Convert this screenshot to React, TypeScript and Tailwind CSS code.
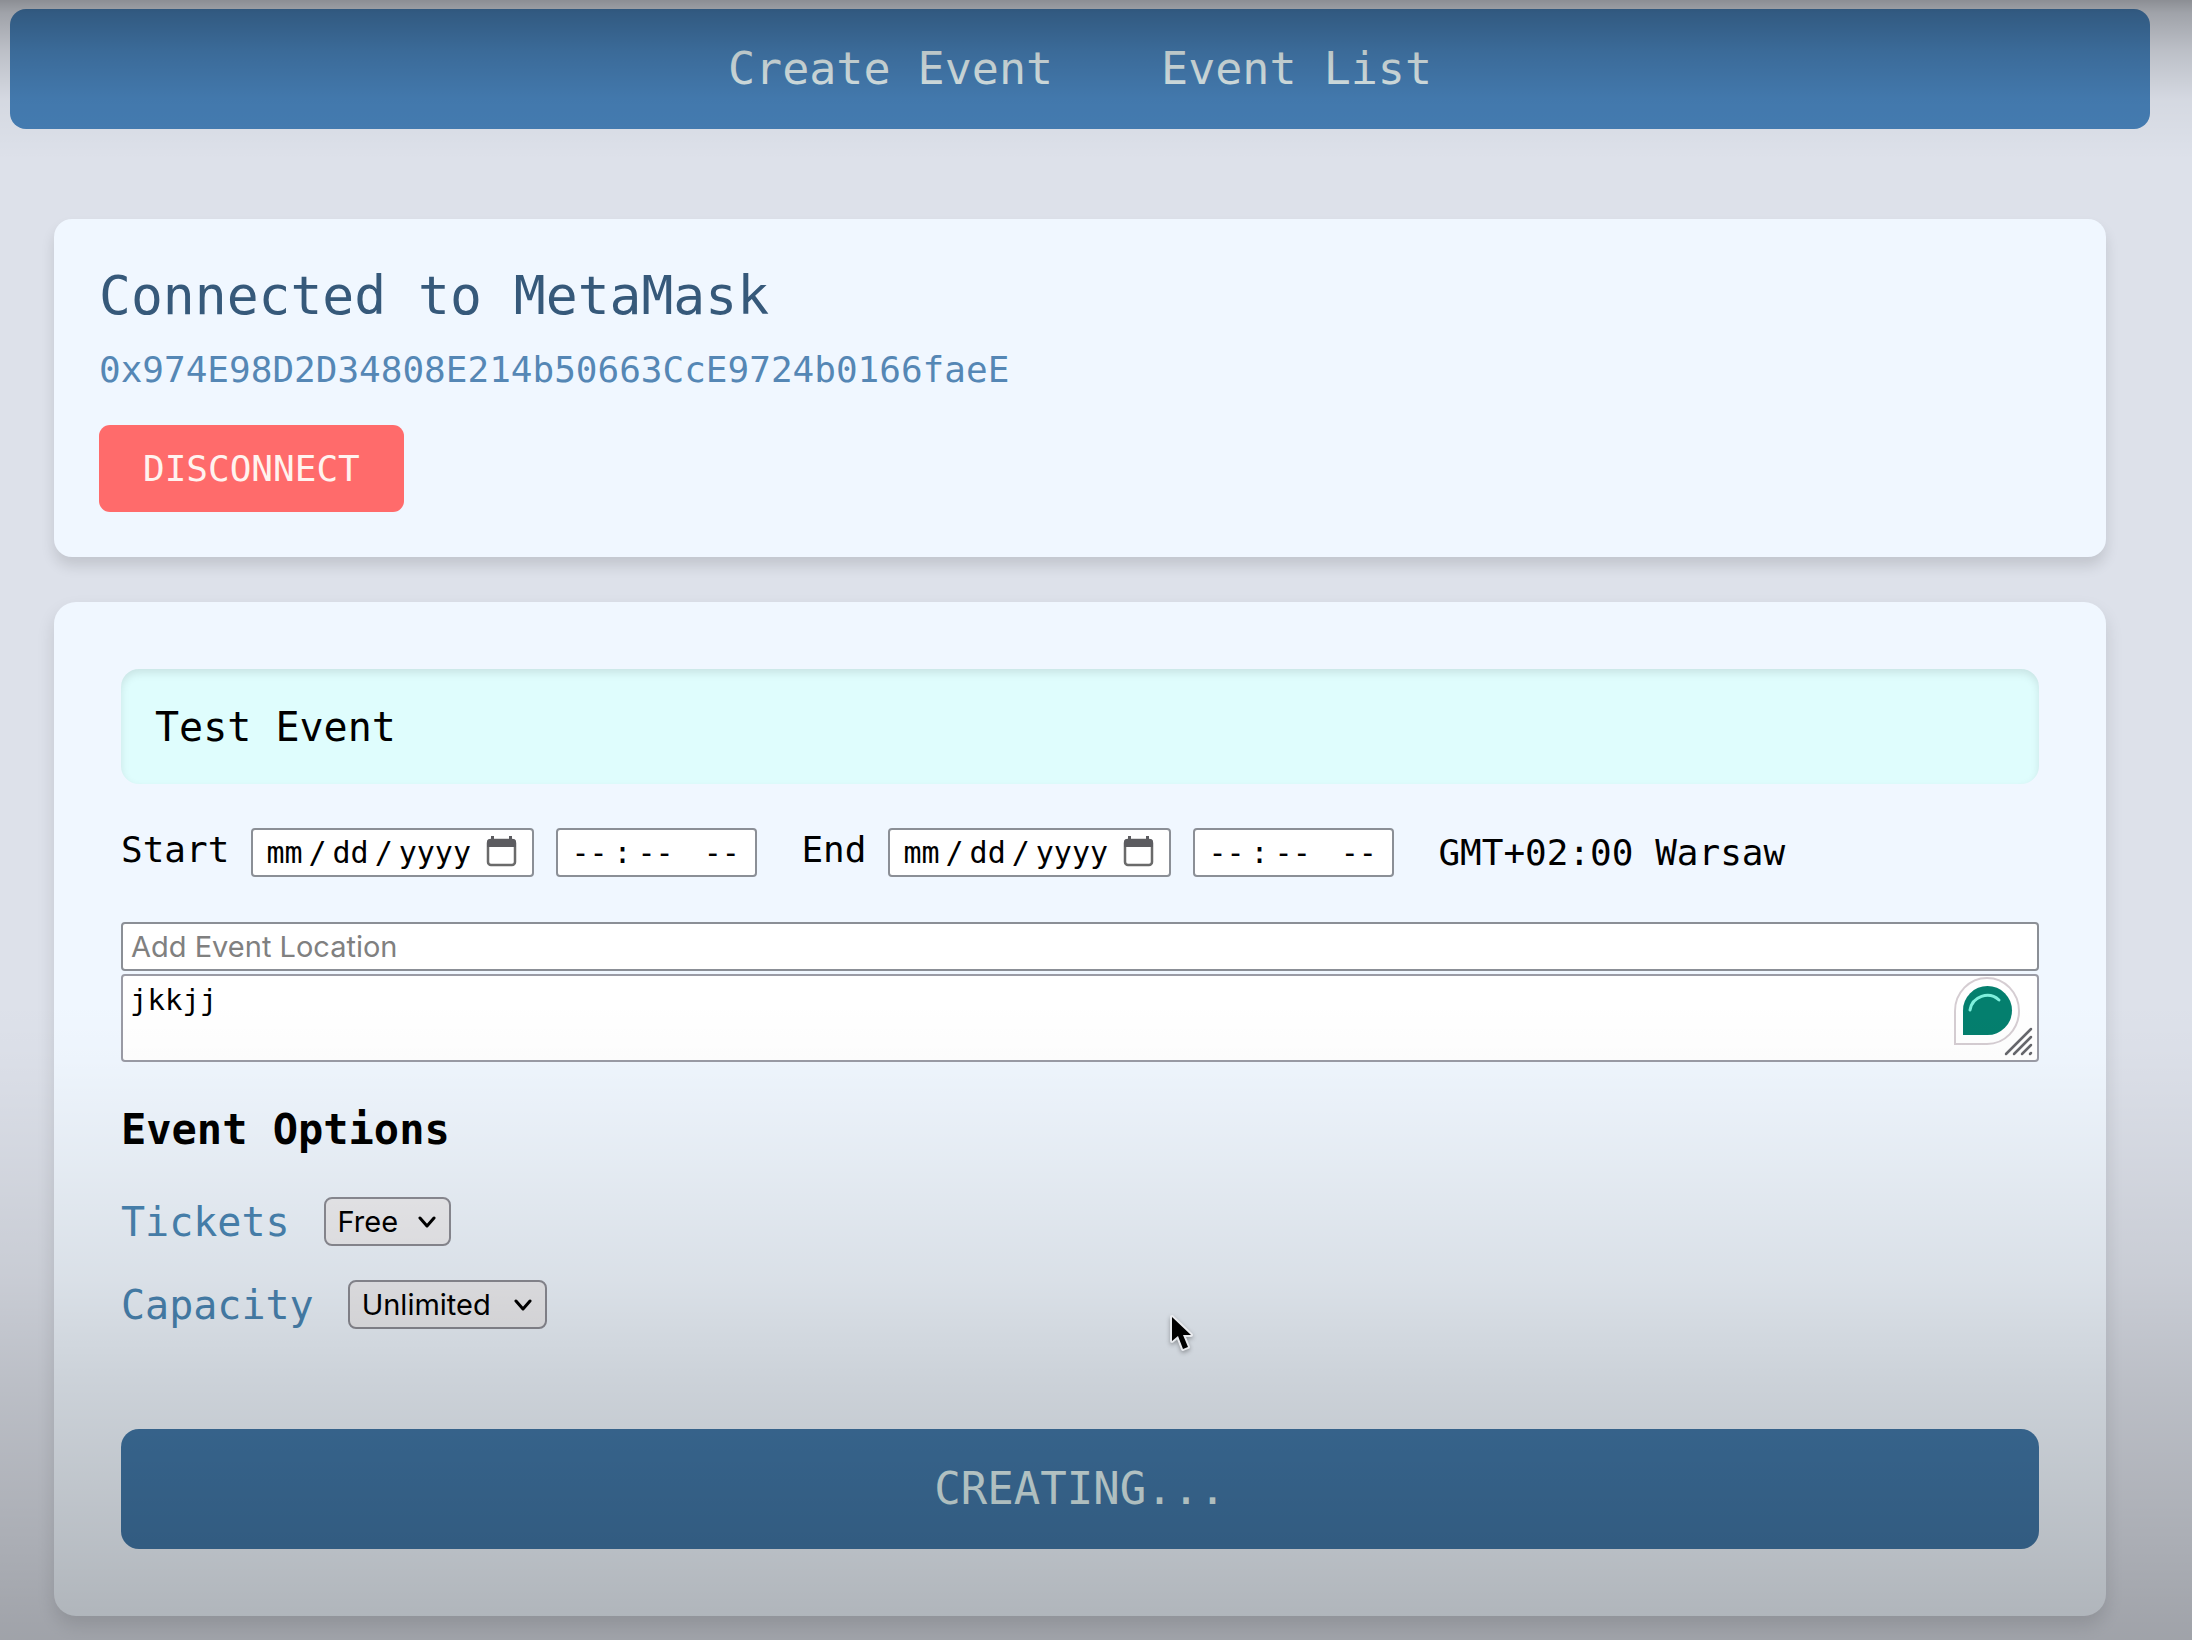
import React, { useState } from 'react';

interface DateTimeFieldProps {
  id: string;
  label: string;
}

const DateTimeField: React.FC<DateTimeFieldProps> = ({ id, label }) => {
  return (
    <div className="flex items-center gap-[22px]">
      <label htmlFor={`${id}-date`} className="pb-[6px] text-[36px] leading-[42px]">
        {label}
      </label>
      <div className="relative">
        <input
          id={`${id}-date`}
          type="date"
          className="block h-[49px] w-[283px] rounded-[4px] border-2 border-[#8b8f96] bg-white pl-[12px] pr-[14px] text-[30px] leading-[36px] text-black [&::-webkit-calendar-picker-indicator]:m-0 [&::-webkit-calendar-picker-indicator]:size-[32px] [&::-webkit-calendar-picker-indicator]:p-0 [&::-webkit-calendar-picker-indicator]:opacity-0 [&::-webkit-datetime-edit-text]:px-[5px]"
        />
        <svg className="pointer-events-none absolute right-[17px] top-[8px] size-[31px]" viewBox="0 0 31 31" fill="none">
          <rect x="2" y="4" width="27" height="25" rx="3" stroke="#6a6a6a" strokeWidth="2.500" />
          <path d="M1 11V6a3 3 0 0 1 3-3h1V0h3v3h15V0h3v3h1a3 3 0 0 1 3 3v5z" fill="#5c5c60" />
        </svg>
      </div>
      <input
        id={`${id}-time`}
        type="time"
        aria-label={`${label} time`}
        className="h-[49px] w-[201px] rounded-[4px] border-2 border-[#8b8f96] bg-white pl-[12px] text-[30px] leading-[36px] text-black [&::-webkit-calendar-picker-indicator]:hidden [&::-webkit-datetime-edit-text]:px-[5px]"
      />
    </div>
  );
};

interface OptionSelectProps {
  id: string;
  label: string;
  options: string[];
  selectClass: string;
}

const OptionSelect: React.FC<OptionSelectProps> = ({ id, label, options, selectClass }) => {
  return (
    <div className="flex items-center gap-[34px]">
      <label htmlFor={id} className="text-[40px] leading-[48px] text-[#4a86b4]">
        {label}
      </label>
      <div className="relative">
        <select
          id={id}
          className={`h-[49px] appearance-none rounded-[8px] border-2 border-[#8e8e96] bg-[#efeff2] pl-[12px] font-['Inter',sans-serif] text-[29px] leading-[36px] text-black ${selectClass}`}
        >
          {options.map((option) => (
            <option key={option}>{option}</option>
          ))}
        </select>
        <svg className="pointer-events-none absolute right-[15px] top-[19px] h-[13px] w-[18px]" viewBox="0 0 18 13" fill="none" stroke="#000" strokeWidth="3">
          <path strokeLinecap="round" strokeLinejoin="round" d="M2 2l7 8 7-8" />
        </svg>
      </div>
    </div>
  );
};

const Navbar: React.FC = () => {
  return (
    <nav className="flex justify-center gap-[108px] rounded-[16px] bg-[#457db3] py-[34px] text-[45px] leading-[52px] text-[#dbe8ea]">
      <a href="#create">Create Event</a>
      <a href="#list">Event List</a>
    </nav>
  );
};

const WalletCard: React.FC = () => {
  return (
    <section className="rounded-[18px] bg-[#f0f7ff] p-[45px] shadow-[0_9px_14px_rgba(0,0,0,0.12)]">
      <h2 className="text-[53px] leading-[63px] text-[#36597a]">Connected to MetaMask</h2>
      <p className="mt-[22px] text-[36px] leading-[42px] text-[#5587b5]">
        0x974E98D2D34808E214b50663CcE9724b0166faeE
      </p>
      <button
        type="button"
        className="mt-[34px] block h-[87px] rounded-[11px] bg-[#ff6b6b] px-[44px] text-[36px] leading-[42px] text-[#fff3ef]"
      >
        DISCONNECT
      </button>
    </section>
  );
};

const EventForm: React.FC = () => {
  const [title, setTitle] = useState('Test Event');
  const [description, setDescription] = useState('jkkjj');

  return (
    <form className="rounded-[22px] bg-[#f0f7ff] p-[67px] shadow-[0_9px_18px_rgba(0,0,0,0.12)]">
      <input
        type="text"
        aria-label="Event name"
        value={title}
        onChange={(e) => setTitle(e.target.value)}
        className="block h-[115px] w-full rounded-[18px] bg-[#dffdfd] px-[34px] text-[40px] leading-[48px] text-black shadow-[inset_0_4px_9px_rgba(0,0,0,0.1)]"
      />

      {/* Dates */}
      <div className="mt-11 flex flex-wrap items-center gap-11">
        <DateTimeField id="start" label="Start" />
        <DateTimeField id="end" label="End" />
        <span className="text-[36px] leading-[42px]">GMT+02:00 Warsaw</span>
      </div>

      <input
        type="text"
        aria-label="Event location"
        placeholder="Add Event Location"
        className="mt-[45px] block h-[49px] w-full rounded-[4px] border-2 border-[#8b8f96] bg-white px-2 font-['Inter',sans-serif] text-[29px] leading-[36px] placeholder:text-[#808080]"
      />
      <div className="relative mt-[3px]">
        <textarea
          aria-label="Event description"
          value={description}
          onChange={(e) => setDescription(e.target.value)}
          className="block h-[88px] w-full resize-none rounded-[4px] border-2 border-[#9a9ba5] bg-white px-[7px] py-[6px] text-[29px] leading-[36px] text-black"
        />
        {/* Writing assistant bubble */}
        <svg className="pointer-events-none absolute right-[19px] top-[3px] h-[68px] w-[66px]" viewBox="0 0 66 68" fill="none">
          <path d="M1 67V34a32 33 0 1 1 32 33z" fill="#fff" stroke="#d5cdd2" strokeWidth="2" />
          <path d="M9 58V33.500A24.500 24.500 0 1 1 33.500 58z" fill="#047f6e" />
          <path d="M16 33a17.500 17.500 0 0 1 29-10" stroke="#7ff0dd" strokeWidth="3" strokeLinecap="round" />
        </svg>
        {/* Resize grip */}
        <svg className="pointer-events-none absolute bottom-[6px] right-[6px] size-[29px]" viewBox="0 0 29 29" stroke="#66676c" strokeWidth="2.500" strokeLinecap="round">
          <path d="M2 27L27 2M10 27L27 10M18 27l9-9M26 27l1-1" />
        </svg>
      </div>

      {/* Options */}
      <h3 className="mt-11 text-[42px] font-bold leading-[48px]">Event Options</h3>
      <div className="mt-[43px] flex flex-col gap-[34px]">
        <OptionSelect id="tickets" label="Tickets" options={['Free', 'Paid']} selectClass="w-[127px]" />
        <OptionSelect id="capacity" label="Capacity" options={['Unlimited', 'Limited']} selectClass="w-[199px]" />
      </div>

      <button
        type="button"
        className="mt-[100px] block h-[120px] w-full rounded-[18px] bg-[#4177a7] text-[44px] leading-[52px] text-[#dceff0]"
      >
        CREATING...
      </button>
    </form>
  );
};

const App: React.FC = () => {
  return (
    <div className="relative min-h-screen overflow-hidden bg-[#dde1ea] pb-6 pl-[10px] pr-[42px] pt-[9px] font-['DejaVu_Sans_Mono',monospace] text-black">
      <Navbar />
      <main className="mx-11 mt-[90px] flex flex-col gap-[45px]">
        <WalletCard />
        <EventForm />
      </main>

      {/* Shading at the top and bottom of the window */}
      <div className="pointer-events-none absolute inset-x-0 top-0 h-[160px] bg-[linear-gradient(to_bottom,rgba(0,0,0,0.37)_0%,rgba(0,0,0,0.28)_8%,rgba(0,0,0,0.15)_32%,rgba(0,0,0,0.04)_62%,rgba(0,0,0,0)_100%)]" />
      <div className="pointer-events-none absolute inset-x-0 bottom-0 h-[640px] bg-[linear-gradient(to_bottom,rgba(0,0,0,0)_0%,rgba(0,0,0,0.01)_9%,rgba(0,0,0,0.045)_23%,rgba(0,0,0,0.095)_44%,rgba(0,0,0,0.15)_59%,rgba(0,0,0,0.23)_86%,rgba(0,0,0,0.28)_100%)]" />

      {/* Mouse pointer */}
      <svg className="pointer-events-none absolute left-[1169px] top-[1313px] h-[40px] w-[26px] drop-shadow-[0_2px_2px_rgba(0,0,0,0.3)]" viewBox="0 0 26 40">
        <path d="M3 4v24l6-5 5 13 5-2-5-12h8z" fill="#000" stroke="#e8eaee" strokeWidth="4" strokeLinejoin="round" paintOrder="stroke" />
      </svg>
    </div>
  );
};

export default App;
